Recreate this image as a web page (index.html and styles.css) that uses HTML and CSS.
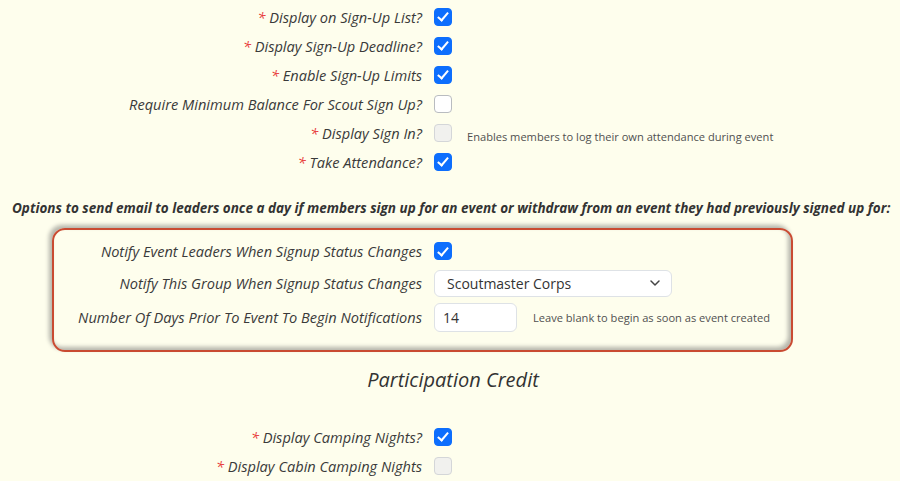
FILE: index.html
```html
<!DOCTYPE html>
<html>
<head>
<meta charset="utf-8">
<link rel="stylesheet" href="styles.css">
</head>
<body>
<div class="page">
  <div class="rows">
    <div class="row"><label class="lbl"><span class="req">*</span> Display on Sign-Up List?</label><div class="ctl"><span class="cb on"></span></div></div>
    <div class="row"><label class="lbl"><span class="req">*</span> Display Sign-Up Deadline?</label><div class="ctl"><span class="cb on"></span></div></div>
    <div class="row"><label class="lbl"><span class="req">*</span> Enable Sign-Up Limits</label><div class="ctl"><span class="cb on"></span></div></div>
    <div class="row"><label class="lbl">Require Minimum Balance For Scout Sign Up?</label><div class="ctl"><span class="cb"></span></div></div>
    <div class="row"><label class="lbl"><span class="req">*</span> Display Sign In?</label><div class="ctl"><span class="cb dis"></span><span class="help help-signin">Enables members to log their own attendance during event</span></div></div>
    <div class="row"><label class="lbl"><span class="req">*</span> Take Attendance?</label><div class="ctl"><span class="cb on"></span></div></div>
  </div>

  <p class="note">Options to send email to leaders once a day if members sign up for an event or withdraw from an event they had previously signed up for:</p>

  <div class="box">
    <div class="row brow"><label class="lbl">Notify Event Leaders When Signup Status Changes</label><div class="ctl"><span class="cb on"></span></div></div>
    <div class="row brow"><label class="lbl">Notify This Group When Signup Status Changes</label><div class="ctl"><div class="select"><span>Scoutmaster Corps</span><svg width="12" height="8" viewBox="0 0 12 8"><path d="M2 2l4 4 4-4" fill="none" stroke="#444" stroke-width="1.5" stroke-linecap="round" stroke-linejoin="round"/></svg></div></div></div>
    <div class="row brow brow3"><label class="lbl">Number Of Days Prior To Event To Begin Notifications</label><div class="ctl"><div class="input">14</div><span class="help help-days">Leave blank to begin as soon as event created</span></div></div>
  </div>

  <h3 class="section">Participation Credit</h3>

  <div class="rows rows2">
    <div class="row"><label class="lbl"><span class="req">*</span> Display Camping Nights?</label><div class="ctl"><span class="cb on"></span></div></div>
    <div class="row"><label class="lbl"><span class="req">*</span> Display Cabin Camping Nights</label><div class="ctl"><span class="cb dis"></span></div></div>
  </div>
</div>
</body>
</html>
```
FILE: styles.css
```css
html, body {
  margin: 0;
  padding: 0;
  background: #fefeed;
}
body {
  font-family: "Open Sans", "Liberation Sans", sans-serif;
  color: #333;
  width: 900px;
  height: 481px;
  overflow: hidden;
}
.page {
  padding-top: 2px;
}
.row {
  display: grid;
  grid-template-columns: 422px 1fr;
  column-gap: 12px;
  height: 29px;
  align-items: center;
}
.lbl {
  text-align: right;
  font-style: italic;
  font-size: 14.6px;
  color: #3a3a3a;
  white-space: nowrap;
}
.req {
  color: #e83a3a;
}
.ctl {
  display: flex;
  align-items: center;
}
.cb {
  width: 18px;
  height: 18px;
  box-sizing: border-box;
  border: 1px solid #b9bcc0;
  border-radius: 4px;
  background: #fff;
  display: inline-block;
  position: relative;
}
.cb.on {
  background: #0d6efd;
  border-color: #0d6efd;
}
.cb.on::after {
  content: "";
  position: absolute;
  left: 5px;
  top: 1.5px;
  width: 4px;
  height: 9px;
  border: solid #fff;
  border-width: 0 2.5px 2.5px 0;
  transform: rotate(40deg);
}
.cb.dis {
  background: #f1f1ee;
  border-color: #d4d6d8;
}
.help {
  font-size: 11.1px;
  color: #505050;
}
.help-signin {
  margin-left: 15px;
  margin-top: 8px;
}
.note {
  margin: 22px 0 0 12px;
  font-size: 13.5px;
  font-weight: bold;
  font-style: italic;
  color: #333;
  white-space: nowrap;
  line-height: 20px;
}
.box {
  margin: 10px 0 0 52px;
  width: 741px;
  height: 124px;
  box-sizing: border-box;
  border: 2px solid #c94b32;
  border-radius: 13px;
  padding-top: 6px;
  box-shadow: -3px -3px 4px #b5b5ab, inset -3px -3px 4px #b5b5ab;
}
.brow {
  grid-template-columns: 368px 1fr;
  height: 30px;
  margin-bottom: 2px;
}
.brow3 {
  margin-top: 4px;
}
.select {
  width: 238px;
  height: 27px;
  box-sizing: border-box;
  border: 1px solid #dee2e6;
  border-radius: 6px;
  background: #fff;
  display: flex;
  align-items: center;
  justify-content: space-between;
  padding: 0 10px 0 12px;
  font-size: 14px;
  color: #333;
}
.input {
  width: 83px;
  height: 29px;
  box-sizing: border-box;
  border: 1px solid #dee2e6;
  border-radius: 6px;
  background: #fff;
  display: flex;
  align-items: center;
  padding-left: 8px;
  font-size: 14px;
  color: #333;
}
.help-days {
  margin-left: 16px;
}
.section {
  margin: 16px 0 0 0;
  text-align: center;
  font-size: 20px;
  font-weight: normal;
  font-style: italic;
  color: #333;
  line-height: 24px;
  padding-left: 6px;
}
.rows2 {
  margin-top: 30px;
}
```
